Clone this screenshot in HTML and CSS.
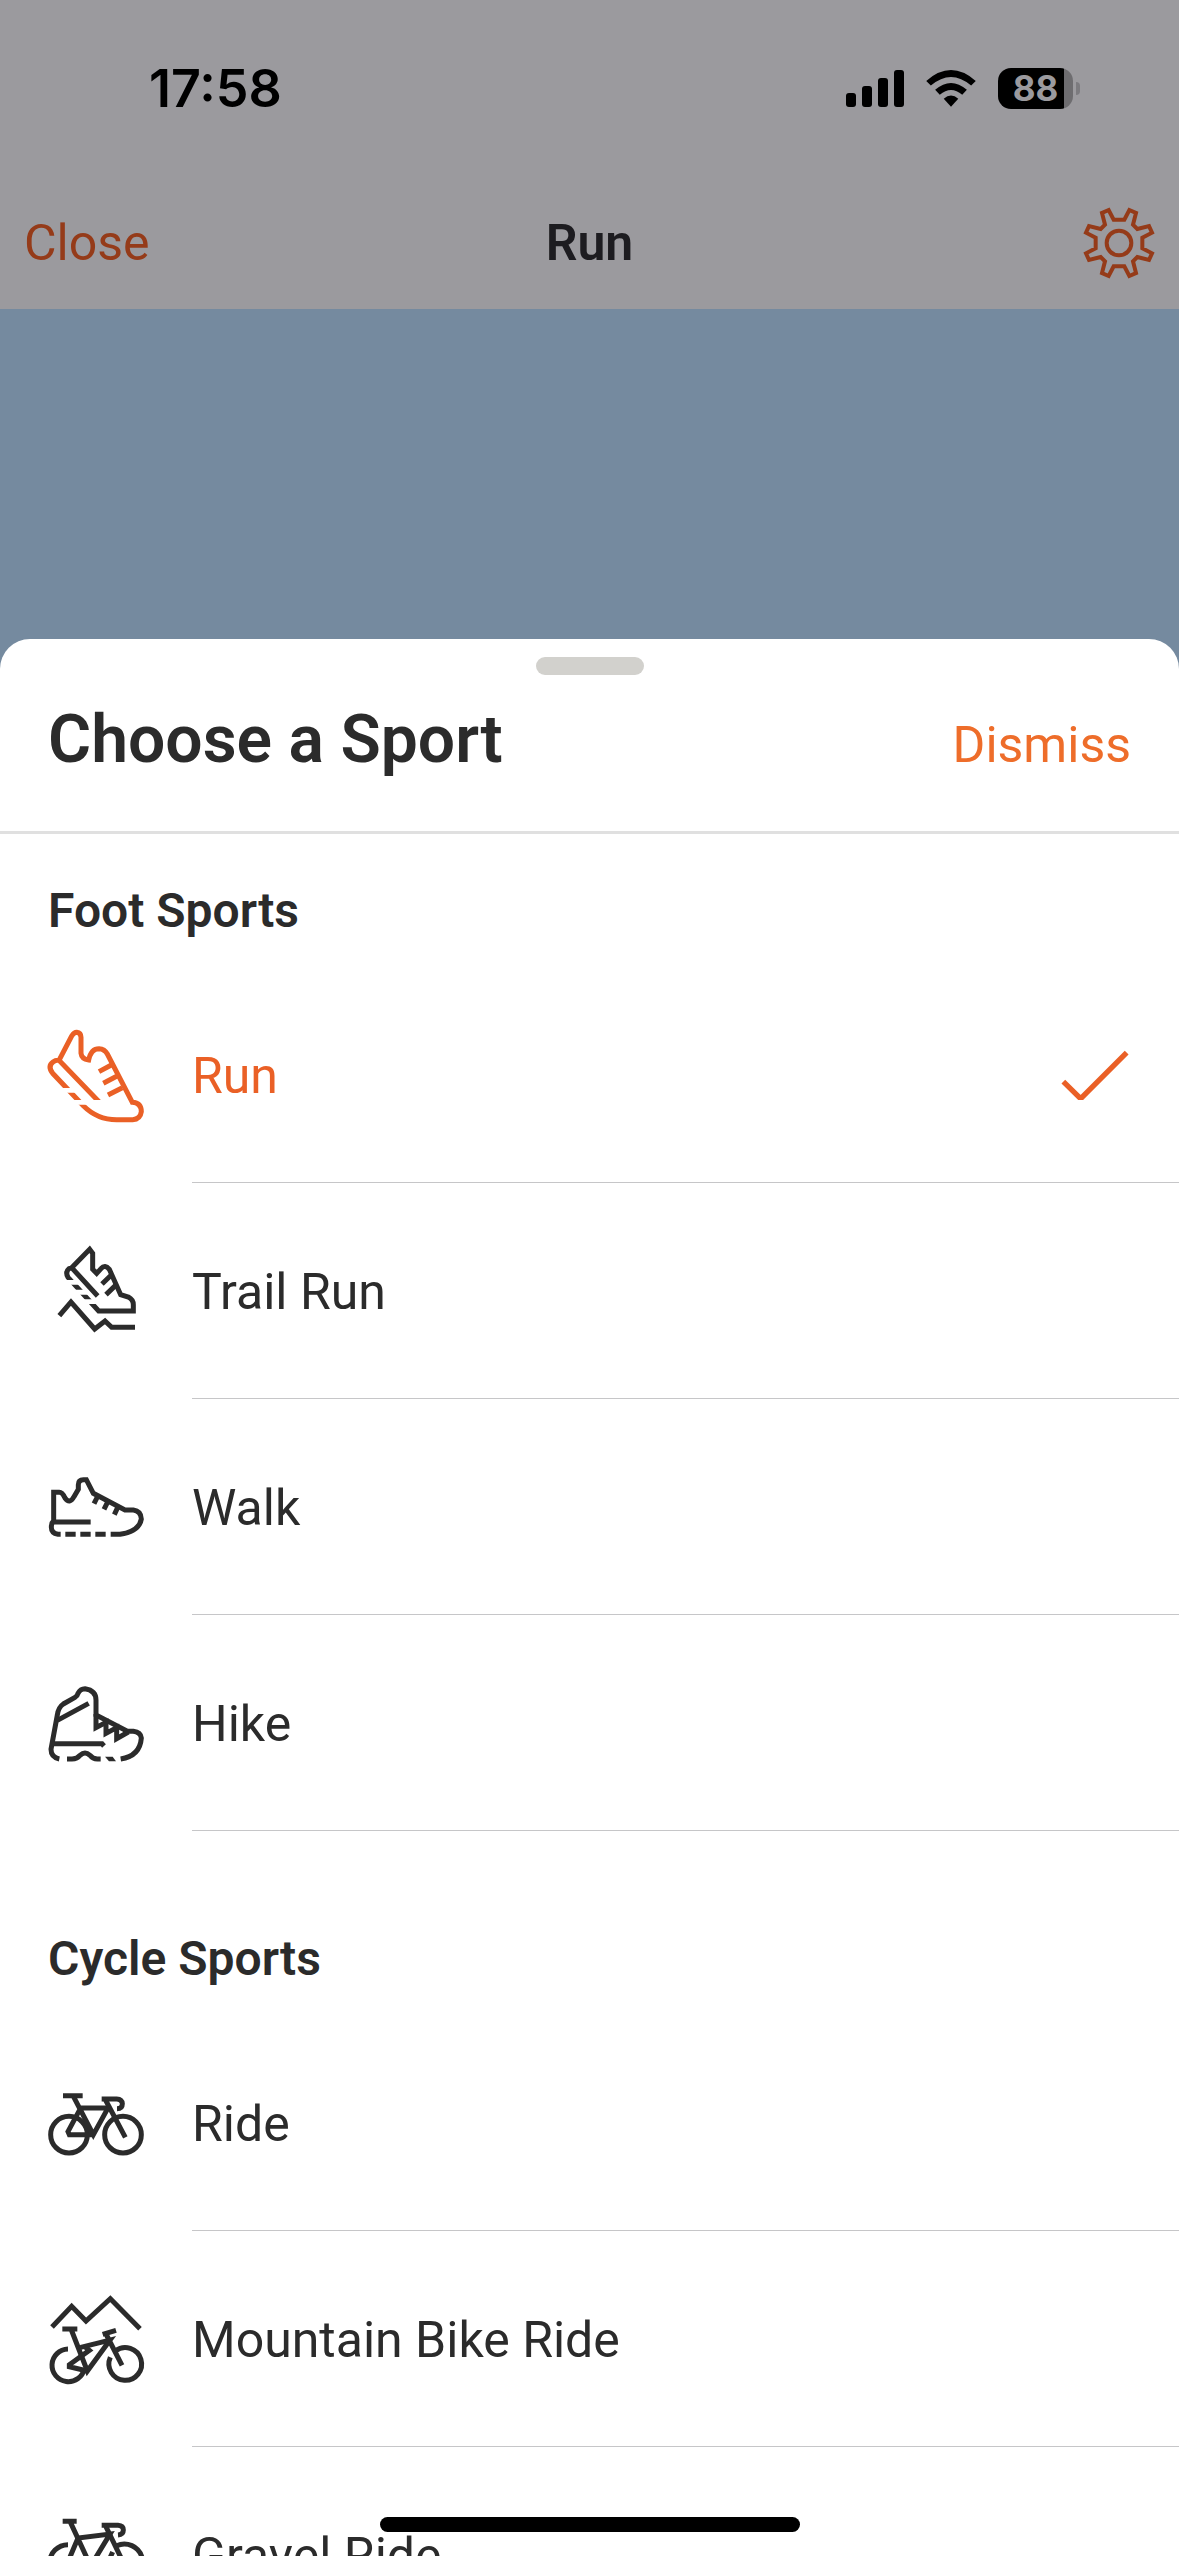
FILE: index.html
```html
<!DOCTYPE html>
<html lang="en">
<head>
  <meta charset="UTF-8">
  <meta name="viewport" content="width=device-width, initial-scale=1.0">
  <title>Choose a Sport</title>
  <link rel="stylesheet" href="styles.css">
</head>
<body>

  <header class="top">
    <div class="status">
      <span class="time">17:58</span>
      <div class="statusIcons">
        <svg width="58" height="37" viewBox="0 0 58 37">
          <rect x="0" y="23" width="10" height="14" rx="3"/>
          <rect x="16" y="16" width="10" height="21" rx="3"/>
          <rect x="32" y="8" width="10" height="29" rx="3"/>
          <rect x="48" y="0" width="10" height="37" rx="3"/>
        </svg>
        <svg width="50" height="37" viewBox="0 0 150 112">
          <path d="M0 33 Q75 -33 150 33 L136 47 Q75 -5 14 47 Z"/>
          <path d="M27 60 Q75 18 123 60 L109 75 Q75 46 41 75 Z"/>
          <path d="M53 87 Q75 68 97 87 L75 111 Z"/>
        </svg>
        <div class="battery"><span>88</span></div>
      </div>
    </div>
    <nav class="navbar">
      <button class="close">Close</button>
      <h1>Run</h1>
      <button class="settings" aria-label="Settings">
        <svg width="72" height="72" viewBox="-108 -108 216 216">
          <circle r="37"/>
          <path d="M-16 -70 H16 L31 -99 L51 -90 L42 -55 L55 -42 L90 -51 L99 -31 L70 -16 V16 L99 31 L90 51 L55 42 L42 55 L51 90 L31 99 L16 70 H-16 L-31 99 L-51 90 L-42 55 L-55 42 L-90 51 L-99 31 L-70 16 V-16 L-99 -31 L-90 -51 L-55 -42 L-42 -55 L-51 -90 L-31 -99 Z"/>
        </svg>
      </button>
    </nav>
  </header>

  <main class="sheet">
    <div class="handle"></div>
    <div class="sheetHeader">
      <h2>Choose a Sport</h2>
      <button class="dismiss">Dismiss</button>
    </div>

    <section>
      <h3>Foot Sports</h3>
      <ul>
        <li>
          <button class="sport selected">
            <svg class="icon" viewBox="0 0 288 288">
              <path d="M33 103 L71 30 Q78 19 86 19 Q99 21 99 34 V82 Q101 100 122 102 Q129 68 153 68 Q170 69 178 84 L253 229 Q280 231 280 257 Q277 280 254 281 H206 Q148 281 106 239 L14 142 Q-2 121 15 108 Q24 101 33 103 L153 227"/>
              <path d="M153 137 L190 117 M166 172 L206 151 M180 207 L223 185"/>
              <path class="cut" d="M28 186 H78 L92 200 H28 Z M60 222 H170 V236 H60 Z"/>
            </svg>
            <span>Run</span>
            <svg class="check" viewBox="0 0 216 156"><path d="M13 101 L65 152 L203 14"/></svg>
          </button>
        </li>
        <li>
          <button class="sport">
            <svg class="icon" viewBox="0 0 288 288">
              <path d="M71 77 L125 22 L134 34 V82 L146 94 L159 80 Q171 66 184 82 L218 158 L241 165 Q256 173 256 188 V207 H152 L60 106 Q51 90 63 80 L71 77 L149 162"/>
              <path d="M162 126 L190 99 M174 158 L205 128"/>
              <path d="M34 221 L69 180 L140 261 L171 237 L191 256 H261"/>
              <path class="cut" d="M50 114 H83 L98 128 H50 Z M70 143 H112 L124 158 H70 Z M90 172 H136 L150 186 H100 Z"/>
            </svg>
            <span>Trail Run</span>
          </button>
        </li>
        <li>
          <button class="sport">
            <svg class="icon" viewBox="0 0 288 288">
              <path d="M38 229 H30 Q10 226 10 208 Q10 194 17 188 V103 H34 Q43 103 51 120 Q65 140 78 116 L91 94 V80 Q91 65 106 65 H115 L136 106 L231 156 H256 Q279 159 280 183 Q274 220 216 229 H188"/>
              <path d="M14 192 H128"/>
              <path d="M52 229 H83 M97 229 H128 M142 229 H173"/>
              <path d="M151 111 L138 137 M181 128 L168 154 M211 144 L199 170"/>
            </svg>
            <span>Walk</span>
          </button>
        </li>
        <li>
          <button class="sport">
            <svg class="icon" viewBox="0 0 288 288">
              <path d="M34 255 Q9 250 9 226 L28 123 Q31 100 46 90 L81 70 Q88 66 90 58 Q97 44 111 44 Q144 49 144 78 V123 L238 172 H256 Q278 175 280 192 Q276 246 218 255"/>
              <path d="M28 139 L122 88 M12 209 H162 L168 216"/>
              <path d="M144 120 V161 L174 145 V178 L206 161 V194 L241 174"/>
              <path d="M57 255 H72 Q88 255 96 244 Q111 230 126 244 Q134 255 148 255 H158"/>
              <path class="solid" d="M171 248 H194 L204 262 H183 Z"/>
            </svg>
            <span>Hike</span>
          </button>
        </li>
      </ul>
    </section>

    <section>
      <h3>Cycle Sports</h3>
      <ul>
        <li>
          <button class="sport">
            <svg class="icon" viewBox="0 0 288 288">
              <circle cx="63" cy="182" r="55"/>
              <circle cx="225" cy="182" r="55"/>
              <path d="M45 65 H104 M75 65 L136 182 L181 100 M96 102 H180 M97 104 L60 173 L64 182 H138"/>
              <path d="M161 75 H206 Q222 76 223 89 Q223 104 207 104 M171 75 L232 190"/>
            </svg>
            <span>Ride</span>
          </button>
        </li>
        <li>
          <button class="sport">
            <svg class="icon" viewBox="0 0 288 288">
              <path d="M12 111 L71 49 L114 93 L187 26 L276 116"/>
              <path d="M60 177 A49 49 0 1 0 109 236 M187 202 A49 49 0 1 0 202 183"/>
              <path d="M43 117 H88 M69 117 L118 243 L186 150 L98 172 M164 133 L204 121 M174 132 L222 226"/>
              <path d="M108 168 L124 181 L64 224 V230 L118 243"/>
            </svg>
            <span>Mountain Bike Ride</span>
          </button>
        </li>
        <li>
          <button class="sport">
            <svg class="icon" viewBox="0 0 288 288">
              <path d="M60 116 A55 55 0 1 0 115 170 M206 119 A55 55 0 1 1 174 170"/>
              <path d="M44 46 H86 M66 46 L128 180 L186 84 L90 96 L58 172 H128"/>
              <path d="M161 58 H210 Q226 59 226 72 Q226 86 210 87 M172 58 L228 174 M194 138 L184 160"/>
            </svg>
            <span>Gravel Ride</span>
          </button>
        </li>
      </ul>
    </section>
  </main>

  <div class="homeIndicator"></div>

</body>
</html>
```

FILE: styles.css
```css
* {
  box-sizing: border-box;
}
body {
  margin: 0;
  height: 100vh;
  display: flex;
  flex-direction: column;
  overflow: hidden;
  background-color: #758a9f;
  font-family: Roboto, 'Liberation Sans', sans-serif;
  font-size: 50px;
  color: #2b2b2b;
}
h1, h2, h3, ul {
  margin: 0;
  padding: 0;
}
ul {
  list-style: none;
}
button {
  border: none;
  padding: 0;
  background: none;
  font: inherit;
  color: inherit;
  cursor: pointer;
}
svg {
  display: block;
  flex-shrink: 0;
}

/* status bar + navbar */
.top {
  flex-shrink: 0;
  background-color: #9b9a9e;
}
.status {
  height: 177px;
  padding: 0 106px 0 149px;
  display: flex;
  align-items: center;
  justify-content: space-between;
  color: #000;
}
.time {
  font-family: Inter, sans-serif;
  font-size: 52px;
  font-weight: 600;
}
.statusIcons {
  display: flex;
  align-items: center;
  gap: 22px;
}
.battery {
  position: relative;
  width: 75px;
  height: 41px;
  border-radius: 13px;
  background: linear-gradient(to right, #000 66px, #6e6d70 66px);
  color: #9b9a9e;
  font-family: Inter, sans-serif;
  font-size: 35px;
  font-weight: 700;
  line-height: 41px;
  text-align: center;
}
.battery::after {
  content: "";
  position: absolute;
  left: 78px;
  top: 14px;
  width: 4px;
  height: 13px;
  border-radius: 0 4px 4px 0;
  background-color: #7c7b7f;
}
.navbar {
  height: 132px;
  padding: 0 24px;
  display: grid;
  grid-template-columns: 1fr auto 1fr;
  align-items: center;
}
.navbar h1 {
  font-size: 50px;
  font-weight: 600;
  color: #1d1c20;
}
.close {
  justify-self: start;
  color: #953b19;
}
.settings {
  justify-self: end;
}
.settings svg {
  fill: none;
  stroke: #953b19;
  stroke-width: 12;
}

/* bottom sheet */
.sheet {
  flex: 1;
  min-height: 0;
  margin-top: 330px;
  padding-top: 18px;
  overflow: hidden;
  background-color: #fff;
  border-radius: 30px 30px 0 0;
}
.handle {
  width: 108px;
  height: 18px;
  margin: 0 auto;
  border-radius: 9px;
  background-color: #d2d1cd;
}
.sheetHeader {
  height: 159px;
  padding: 25px 48px 0;
  display: flex;
  justify-content: space-between;
  align-items: baseline;
  border-bottom: 3px solid #e0e0e0;
}
.sheetHeader h2 {
  font-size: 66px;
  font-weight: 600;
  line-height: 80px;
}
.dismiss {
  color: #ee6d2a;
}
h3 {
  padding: 47px 48px 26px;
  font-size: 48px;
  font-weight: 600;
  line-height: 60px;
}
section + section h3 {
  padding-top: 98px;
}
.sport {
  display: flex;
  align-items: center;
  width: 100%;
  height: 216px;
  padding-left: 48px;
  text-align: left;
}
.sport span {
  flex: 1;
  align-self: stretch;
  margin-left: 48px;
  border-bottom: 1px solid #c6c6c8;
  line-height: 218px;
}
.icon {
  width: 96px;
  height: 96px;
  margin-bottom: 2px;
  overflow: visible;
  fill: none;
  stroke: currentColor;
  stroke-width: 15;
}
.icon .cut {
  fill: #fff;
  stroke: none;
}
.icon .solid {
  fill: currentColor;
  stroke: none;
}
.selected {
  position: relative;
  color: #ea6026;
}
.check {
  position: absolute;
  right: 48px;
  width: 72px;
  height: 52px;
  margin-bottom: 2px;
  fill: none;
  stroke: currentColor;
  stroke-width: 16;
}

.homeIndicator {
  position: fixed;
  left: 50%;
  bottom: 24px;
  width: 420px;
  height: 15px;
  margin-left: -210px;
  border-radius: 8px;
  background-color: #000;
}
```
